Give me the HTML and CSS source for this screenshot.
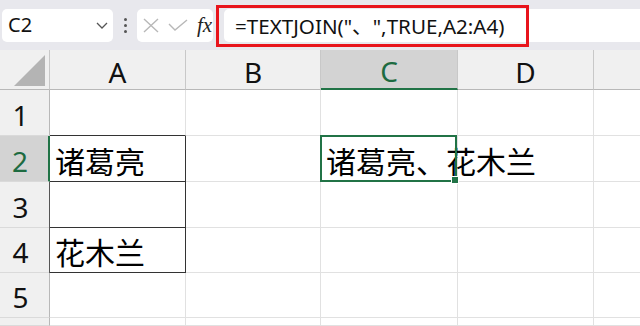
FILE: index.html
```html
<!DOCTYPE html>
<html lang="zh-CN">
<head>
<meta charset="utf-8">
<title>TEXTJOIN</title>
<link rel="stylesheet" href="styles.css">
</head>
<body>
<div class="toolbar">
  <div class="namebox">
    <span class="ref">C2</span>
    <svg class="chev" width="12" height="7" viewBox="0 0 12 7"><path d="M1 1 L6 6 L11 1" fill="none" stroke="#555" stroke-width="1.3"/></svg>
  </div>
  <div class="dots"><i></i><i></i><i></i></div>
  <div class="fxbox">
    <svg class="ico" width="16" height="15" viewBox="0 0 16 15"><path d="M1 1 L15 14 M15 1 L1 14" stroke="#b8b8b8" stroke-width="1.4" fill="none"/></svg>
    <svg class="ico" width="20" height="12" viewBox="0 0 20 12"><path d="M1 5 L7 11 L19 1" stroke="#b8b8b8" stroke-width="1.4" fill="none"/></svg>
    <span class="fx">fx</span>
  </div>
  <div class="formula">=TEXTJOIN("、",TRUE,A2:A4)</div>
  <div class="callout"></div>
</div>
<div class="sheet">
  <div class="hd corner"><svg width="32" height="31" viewBox="0 0 32 31"><polygon points="31,0 31,31 0,31" fill="#b4b4b4"/></svg></div>
  <div class="hd col">A</div>
  <div class="hd col">B</div>
  <div class="hd col sel-col">C</div>
  <div class="hd col">D</div>
  <div class="hd col last"></div>

  <div class="hd row">1</div>
  <div class="cell top-a"></div><div class="cell"></div><div class="cell"></div><div class="cell"></div><div class="cell last"></div>

  <div class="hd row sel-row">2</div>
  <div class="cell box">诸葛亮</div><div class="cell"></div><div class="cell active">诸葛亮、花木兰<span class="selection"></span></div><div class="cell"></div><div class="cell last"></div>

  <div class="hd row">3</div>
  <div class="cell box edge"></div><div class="cell"></div><div class="cell"></div><div class="cell"></div><div class="cell last"></div>

  <div class="hd row">4</div>
  <div class="cell box edge">花木兰</div><div class="cell"></div><div class="cell"></div><div class="cell"></div><div class="cell last"></div>

  <div class="hd row">5</div>
  <div class="cell"></div><div class="cell"></div><div class="cell"></div><div class="cell"></div><div class="cell last"></div>

  <div class="hd row"></div>
  <div class="cell"></div><div class="cell"></div><div class="cell"></div><div class="cell"></div><div class="cell last"></div>
</div>
</body>
</html>
```
FILE: styles.css
```css
* { box-sizing: border-box; }
html, body { margin: 0; padding: 0; }
body {
  width: 640px;
  height: 326px;
  overflow: hidden;
  background: #fff;
  font-family: "Noto Sans", "Noto Sans CJK SC", sans-serif;
  color: #000;
}
.toolbar {
  position: relative;
  height: 50px;
  background: #e8e8ed;
  display: flex;
  align-items: center;
  padding-left: 2px;
}
.namebox {
  width: 111px;
  height: 33px;
  background: #fff;
  border-radius: 5px;
  display: flex;
  align-items: center;
  justify-content: space-between;
  padding: 0 5px 0 6px;
}
.ref {
  font-size: 20px;
  line-height: 1;
  color: #111;
}
.chev { margin-top: 1px; }
.dots {
  width: 24px;
  display: flex;
  flex-direction: column;
  align-items: center;
  gap: 3px;
}
.dots i {
  display: block;
  width: 3px;
  height: 3px;
  background: #555;
  border-radius: 50%;
}
.fxbox {
  width: 76px;
  height: 33px;
  background: #fff;
  border-radius: 5px;
  display: flex;
  align-items: center;
  padding-left: 6px;
  gap: 9px;
}
.fx {
  font-family: "Liberation Serif", "DejaVu Serif", serif;
  font-style: italic;
  font-size: 21px;
  line-height: 1;
  color: #222;
}
.formula {
  flex: 1;
  margin-left: 11px;
  height: 33px;
  background: #fff;
  border-radius: 5px 0 0 5px;
  display: flex;
  align-items: center;
  padding-left: 11px;
  font-size: 20.6px;
  white-space: nowrap;
  color: #111;
}
.callout {
  position: absolute;
  left: 216px;
  top: 5px;
  width: 313px;
  height: 42px;
  border: 3px solid #e8141c;
}
.sheet {
  display: grid;
  grid-template-columns: 50px 136px 135px 137px 136px 1fr;
  grid-template-rows: 40px 46px 46px 46px 45px 45px 1fr;
  height: 276px;
}
.hd {
  background: #f0f0f0;
  border-right: 1px solid #c8c8c8;
  border-bottom: 1px solid #c8c8c8;
  display: flex;
  align-items: center;
  justify-content: center;
  font-size: 28px;
  line-height: 1;
  color: #111;
}
.col { padding-top: 4px; border-bottom-color: #b8b8b8; }
.row { padding-right: 8px; padding-top: 4px; border-bottom-color: #dadada; border-right-color: #b8b8b8; }
.corner {
  align-items: flex-end;
  justify-content: flex-end;
  padding: 0 3px 3px 0;
  border-bottom-color: #b8b8b8;
}
.corner svg { display: block; }
.sel-col {
  background: #d3d3d3;
  color: #1d6b41;
  border-bottom: 2px solid #217346;
}
.sel-row {
  background: #d3d3d3;
  color: #1d6b41;
  border-right: 2px solid #217346;
}
.cell {
  border-right: 1px solid #e1e1e1;
  border-bottom: 1px solid #e1e1e1;
  font-family: "Noto Sans CJK SC", "Noto Sans", sans-serif;
  font-size: 30px;
  line-height: 1;
  white-space: nowrap;
  display: flex;
  align-items: center;
  padding: 2px 0 0 5px;
  min-width: 0;
}
.last { border-right: none; }
.top-a { border-bottom-color: #333; }
.box {
  border-right-color: #333;
  border-bottom-color: #333;
}
.edge { box-shadow: -1px 0 0 #555; }
.active { position: relative; }
.selection {
  position: absolute;
  left: -1px;
  top: -1px;
  right: 0;
  bottom: -1px;
  border: 2px solid #217346;
}
.selection::after {
  content: "";
  position: absolute;
  right: -4px;
  bottom: -4px;
  width: 6px;
  height: 6px;
  background: #217346;
  border: 1px solid #fff;
}
```
